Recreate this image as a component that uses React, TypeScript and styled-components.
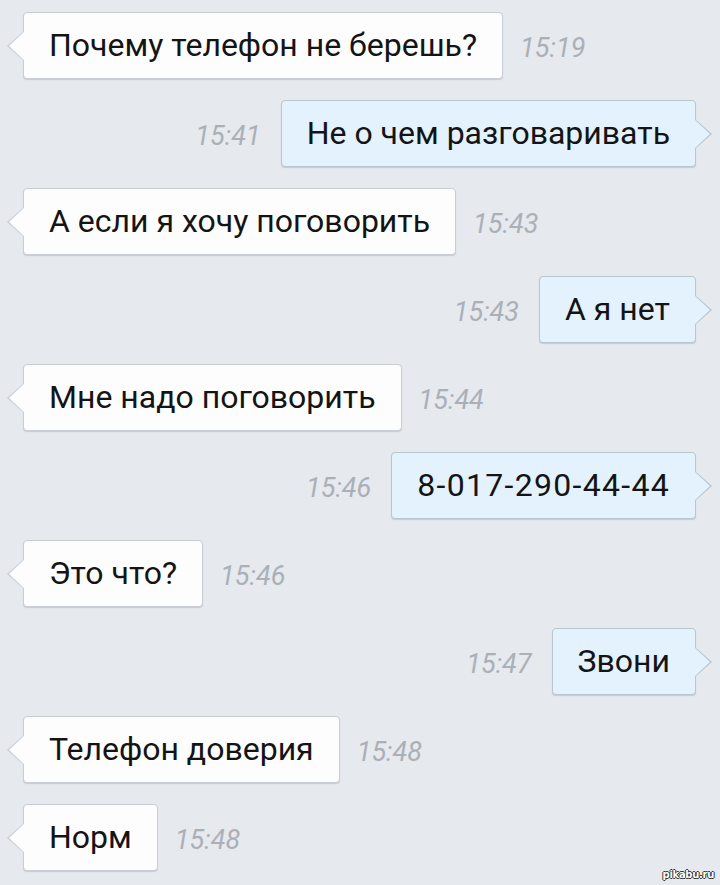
import React from "react";
import styled, { createGlobalStyle, css } from "styled-components";

const GlobalStyle = createGlobalStyle`
    html, body {
        margin: 0;
        padding: 0;
        background: #e6e9ed;
    }
    body {
        font-family: Roboto, "Noto Sans", sans-serif;
        overflow: hidden;
    }
`;

interface Message {
    text: string;
    time: string;
    out: boolean;
}

const messages: Message[] = [
    { text: "Почему телефон не берешь?", time: "15:19", out: false },
    { text: "Не о чем разговаривать", time: "15:41", out: true },
    { text: "А если я хочу поговорить", time: "15:43", out: false },
    { text: "А я нет", time: "15:43", out: true },
    { text: "Мне надо поговорить", time: "15:44", out: false },
    { text: "8-017-290-44-44", time: "15:46", out: true },
    { text: "Это что?", time: "15:46", out: false },
    { text: "Звони", time: "15:47", out: true },
    { text: "Телефон доверия", time: "15:48", out: false },
    { text: "Норм", time: "15:48", out: false },
];

const StyledChat = styled.div`
    position: relative;
    width: 720px;
    height: 885px;
    box-sizing: border-box;
    padding: 12px 0 0;
    display: flex;
    flex-direction: column;
    gap: 21px;
`;

const StyledRow = styled.div<{ $out: boolean }>`
    display: flex;
    align-items: center;
    gap: 17px;
    ${(props) =>
        props.$out
            ? css`
                  flex-direction: row-reverse;
                  padding-right: 24px;
                  gap: 20px;
              `
            : css`
                  padding-left: 23px;
              `}
`;

const StyledBubble = styled.div<{ $out: boolean; $numeric: boolean }>`
    position: relative;
    box-sizing: border-box;
    height: 67px;
    padding: 14px 25px 0 25px;
    border: 1px solid;
    border-radius: 4px;
    font-size: 32px;
    line-height: 37px;
    color: #141414;
    white-space: nowrap;
    letter-spacing: ${(props) => (props.$numeric ? "1.3px" : "0")};
    box-shadow: 0 1px 1px rgba(60, 70, 85, 0.18);
    background: ${(props) => (props.$out ? "#e3f2fc" : "#fdfdfd")};
    border-color: ${(props) => (props.$out ? "#b7c6d2" : "#c9ced5")};

    &::before,
    &::after {
        content: "";
        position: absolute;
        width: 0;
        height: 0;
        border-top: 15px solid transparent;
        border-bottom: 15px solid transparent;
    }
    ${(props) =>
        props.$out
            ? css`
                  &::before {
                      right: -17px;
                      top: 18px;
                      border-left: 17px solid #b7c6d2;
                  }
                  &::after {
                      right: -15px;
                      top: 18px;
                      border-left: 16px solid #e3f2fc;
                  }
              `
            : css`
                  &::before {
                      left: -17px;
                      top: 18px;
                      border-right: 17px solid #c9ced5;
                  }
                  &::after {
                      left: -15px;
                      top: 18px;
                      border-right: 16px solid #fdfdfd;
                  }
              `}
`;

const StyledTime = styled.span`
    font-size: 27px;
    font-style: italic;
    font-weight: 400;
    color: #abb0b8;
    margin-top: 5px;
`;

const StyledMark = styled.div`
    position: absolute;
    right: 6px;
    bottom: 5px;
    font-family: "DejaVu Sans", sans-serif;
    font-size: 10px;
    font-weight: bold;
    color: #fff;
    letter-spacing: -0.3px;
    text-shadow: 1px 0 0 #333, -1px 0 0 #333, 0 1px 0 #333, 0 -1px 0 #333;
`;

export default function App(): JSX.Element {
    return (
        <>
            <GlobalStyle />
            <StyledChat>
                {messages.map((m, i) => (
                    <StyledRow key={i} $out={m.out}>
                        <StyledBubble $out={m.out} $numeric={/^[\d-]+$/.test(m.text)}>
                            {m.text}
                        </StyledBubble>
                        <StyledTime>{m.time}</StyledTime>
                    </StyledRow>
                ))}
                <StyledMark>pikabu.ru</StyledMark>
            </StyledChat>
        </>
    );
}
